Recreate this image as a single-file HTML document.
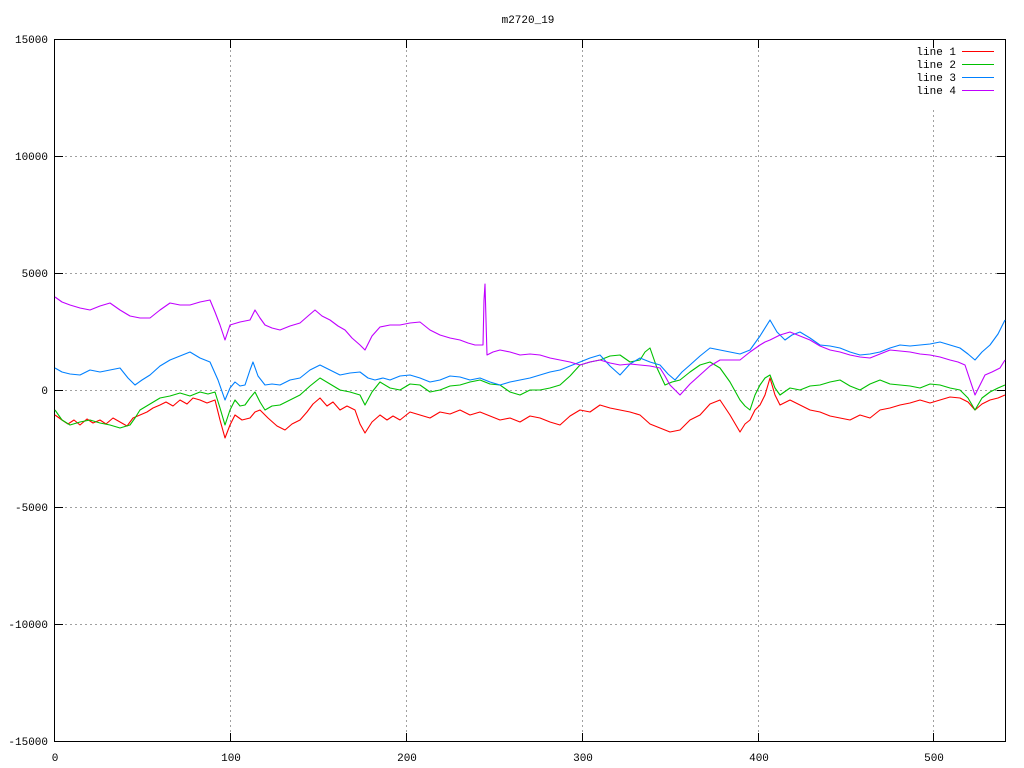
<!DOCTYPE html>
<html><head><meta charset="utf-8"><style>
html,body{margin:0;padding:0;background:#fff;}
svg{display:block;font-family:"Liberation Mono","DejaVu Sans Mono",monospace;font-size:11px;}
</style></head><body>
<svg width="1024" height="768" viewBox="0 0 1024 768" xmlns="http://www.w3.org/2000/svg">
<rect width="1024" height="768" fill="#fff"/>
<g stroke="#a0a0a0" stroke-width="1" stroke-dasharray="2,3">
<line x1="230.5" y1="40" x2="230.5" y2="741"/>
<line x1="406.5" y1="40" x2="406.5" y2="741"/>
<line x1="582.5" y1="40" x2="582.5" y2="741"/>
<line x1="758.5" y1="40" x2="758.5" y2="741"/>
<line x1="933.5" y1="110" x2="933.5" y2="741"/>
<line x1="55" y1="156.5" x2="1005" y2="156.5"/>
<line x1="55" y1="273.5" x2="1005" y2="273.5"/>
<line x1="55" y1="390.5" x2="1005" y2="390.5"/>
<line x1="55" y1="507.5" x2="1005" y2="507.5"/>
<line x1="55" y1="624.5" x2="1005" y2="624.5"/>
</g>
<g stroke="#000" stroke-width="1">
<rect x="54.5" y="39.5" width="951" height="702" fill="none"/>
<path d="M230.5 741v-8M406.5 741v-8M582.5 741v-8M758.5 741v-8M933.5 741v-8M230.5 40v8M406.5 40v8M582.5 40v8M758.5 40v8M933.5 40v8M55 156.5h8M55 273.5h8M55 390.5h8M55 507.5h8M55 624.5h8M1005 156.5h-8M1005 273.5h-8M1005 390.5h-8M1005 507.5h-8M1005 624.5h-8"/>
</g>
<g fill="#000">
<text x="528" y="23" text-anchor="middle">m2720_19</text>
<text x="48" y="43" text-anchor="end">15000</text>
<text x="48" y="160" text-anchor="end">10000</text>
<text x="48" y="277" text-anchor="end">5000</text>
<text x="48" y="394" text-anchor="end">0</text>
<text x="48" y="511" text-anchor="end">-5000</text>
<text x="48" y="628" text-anchor="end">-10000</text>
<text x="48" y="745" text-anchor="end">-15000</text>
<text x="55" y="761" text-anchor="middle">0</text>
<text x="231" y="761" text-anchor="middle">100</text>
<text x="407" y="761" text-anchor="middle">200</text>
<text x="583" y="761" text-anchor="middle">300</text>
<text x="759" y="761" text-anchor="middle">400</text>
<text x="934" y="761" text-anchor="middle">500</text>
<text x="956" y="55" text-anchor="end">line 1</text>
<text x="956" y="68" text-anchor="end">line 2</text>
<text x="956" y="81" text-anchor="end">line 3</text>
<text x="956" y="94" text-anchor="end">line 4</text>
</g>
<g stroke-width="1" shape-rendering="crispEdges">
<line x1="962" y1="51.5" x2="994" y2="51.5" stroke="#ff0000"/>
<line x1="962" y1="64.5" x2="994" y2="64.5" stroke="#00c000"/>
<line x1="962" y1="77.5" x2="994" y2="77.5" stroke="#0080ff"/>
<line x1="962" y1="90.5" x2="994" y2="90.5" stroke="#c000ff"/>
</g>
<g fill="none" stroke-width="1.1" stroke-linejoin="round">
<polyline stroke="#ff0000" points="55,415 62,420 68,424 74,420 80,425 87,419 93,423 100,420 106,424 113,418 120,422 127,426 133,418 140,415 147,412 153,408 160,405 166,402 173,406 180,400 187,404 193,398 200,400 207,403 215,400 220,420 225,438 230,425 235,415 242,420 250,418 255,412 260,410 268,418 277,426 285,430 292,424 300,420 307,412 313,404 320,398 327,406 333,402 340,410 347,406 355,410 360,424 365,433 372,422 380,415 387,420 393,416 400,420 410,412 420,415 430,418 440,412 450,414 460,410 470,415 480,412 490,416 500,420 510,418 520,422 530,416 540,418 550,422 560,425 570,416 580,410 590,412 600,405 610,408 620,410 630,412 640,415 650,424 660,428 670,432 680,430 690,420 700,415 710,404 720,400 730,415 740,432 745,424 750,420 755,410 760,405 765,395 770,378 775,395 780,405 790,400 800,405 810,410 820,412 830,416 840,418 850,420 860,415 870,418 880,410 890,408 900,405 910,403 920,400 930,403 940,400 950,397 960,398 968,402 975,410 982,404 990,400 998,398 1005,395"/>
<polyline stroke="#00c000" points="55,410 62,420 70,425 80,422 90,420 100,423 110,425 120,428 130,425 135,418 140,410 150,404 160,398 170,396 180,393 190,396 200,392 208,394 215,392 220,408 225,425 230,410 235,400 240,406 245,405 250,398 255,392 260,402 265,410 272,406 280,405 290,400 300,395 310,386 320,378 330,384 340,390 350,392 360,395 365,405 372,392 380,382 390,388 400,390 410,384 420,385 430,392 440,390 450,386 460,385 470,382 480,380 490,384 500,385 510,392 520,395 530,390 540,390 550,388 560,385 570,376 580,365 590,362 600,360 610,356 620,355 630,362 640,360 645,352 650,348 657,368 665,385 672,382 680,380 690,372 700,365 710,362 720,368 730,382 740,400 745,406 750,410 755,395 760,385 765,378 770,375 775,388 780,395 790,388 800,390 810,386 820,385 830,382 840,380 850,386 860,390 870,384 880,380 890,384 900,385 910,386 920,388 930,384 940,385 950,388 960,390 968,398 975,410 982,398 990,392 998,388 1005,385"/>
<polyline stroke="#0080ff" points="55,368 62,372 70,374 80,375 90,370 100,372 110,370 120,368 128,378 135,385 142,380 150,375 160,366 170,360 180,356 190,352 200,358 210,362 218,380 225,400 230,388 235,382 240,386 245,385 250,370 253,362 258,376 265,385 272,384 280,385 290,380 300,378 310,370 320,365 330,370 340,375 350,373 360,372 368,378 375,380 383,378 390,380 400,376 410,375 420,378 430,382 440,380 450,376 460,377 470,380 480,378 490,382 500,385 510,382 520,380 530,378 540,375 550,372 560,370 570,366 580,362 590,358 600,355 610,366 620,375 630,364 640,358 650,362 660,365 668,374 675,380 682,372 690,365 700,356 710,348 720,350 730,352 740,354 750,350 760,336 770,320 777,332 785,340 792,335 800,332 810,338 820,345 830,346 840,348 850,352 860,355 870,354 880,352 890,348 900,345 910,346 920,345 930,344 940,342 950,345 960,348 968,354 975,360 982,352 990,345 998,334 1005,320"/>
<polyline stroke="#c000ff" points="55,297 62,302 70,305 80,308 90,310 100,306 110,303 120,310 130,316 140,318 150,318 160,310 170,303 180,305 190,305 200,302 210,300 215,312 220,325 225,340 230,325 240,322 250,320 255,310 260,318 265,325 272,328 280,330 290,326 300,323 308,316 315,310 322,316 330,320 338,326 345,330 352,338 360,345 365,350 372,336 380,327 390,325 400,325 410,323 420,322 430,330 440,335 450,338 460,340 468,343 475,345 483,345 484,300 485,284 486,320 487,355 493,352 500,350 510,352 520,355 530,354 540,355 550,358 560,360 570,362 580,365 590,362 600,360 610,363 620,365 630,364 640,365 650,366 660,368 665,376 670,385 675,390 680,395 690,384 700,375 710,366 720,360 730,360 740,360 750,352 760,345 765,342 770,340 780,335 790,332 800,336 810,340 820,346 830,350 840,352 850,355 860,357 870,358 880,354 890,350 900,351 910,352 920,354 930,355 940,357 950,360 958,362 965,365 970,380 975,395 980,385 985,375 992,372 1000,368 1005,360"/>
</g>
</svg>
</body></html>
